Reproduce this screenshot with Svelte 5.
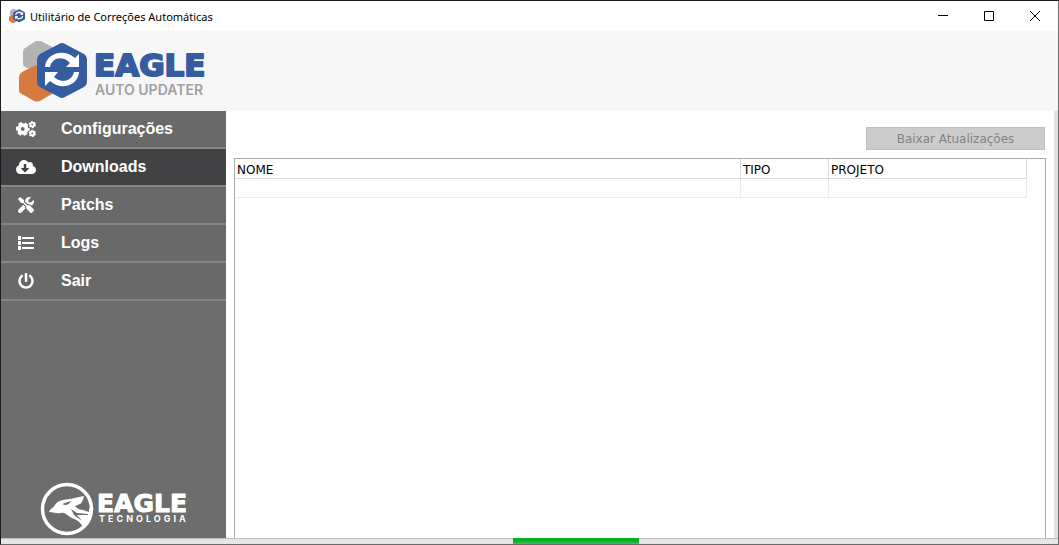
<script lang="ts">
	type Row = { nome: string; tipo: string; projeto: string };

	const menu = [
		{ id: 'config', label: 'Configurações' },
		{ id: 'downloads', label: 'Downloads' },
		{ id: 'patchs', label: 'Patchs' },
		{ id: 'logs', label: 'Logs' },
		{ id: 'sair', label: 'Sair' }
	];

	let active = $state('downloads');
	let rows = $state<Row[]>([{ nome: '', tipo: '', projeto: '' }]);
	let progress = $state({ start: 48.4, size: 12 });
</script>

<svelte:head>
	<title>Utilitário de Correções Automáticas</title>
</svelte:head>

{#snippet hexagons()}
	<path d="M22 0 L35 7 Q37 8 37 11 V25 L22 34 L6 26 Q4 25 4 22 V11 Q4 8 6 7 L17 0 Q20 -1 22 0Z" fill="#b3b3b3" />
	<path d="M3 31 L15 25 Q18 23 21 25 L34 32 V50 Q34 53 31 54 L21 60 Q18 61 15 60 L3 53 Q0 52 0 49 V36 Q0 33 3 31Z" fill="#d77a3f" />
	<path d="M40 3 Q43 1 46 3 L65 13 Q68 15 68 18 V41 Q68 44 65 46 L46 56 Q43 58 40 56 L21 46 Q18 44 18 41 V18 Q18 15 21 13Z" fill="#345c9f" />
	<path d="M26 26 C27 12 45 7 56 17 L60 13 V26 H47 L51 22 C43 14 33 17 31 26Z" fill="#fff" />
	<path d="M60 31 C59 45 42 50 31 40 L26 45 V31 H39 L35 36 C43 43 53 40 55 31Z" fill="#fff" />
{/snippet}

<div class="window">
	<header class="titlebar">
		<svg class="app-icon" viewBox="0 0 68 61" aria-hidden="true">{@render hexagons()}</svg>
		<span class="title">Utilitário de Correções Automáticas</span>
		<div class="controls">
			<button type="button" aria-label="Minimizar">
				<svg viewBox="0 0 10 10"><path d="M0 4.5H10" /></svg>
			</button>
			<button type="button" aria-label="Maximizar">
				<svg viewBox="0 0 10 10"><path d="M.5 .5H9.5V9.5H.5Z" /></svg>
			</button>
			<button type="button" aria-label="Fechar">
				<svg viewBox="0 0 10 10"><path d="M0 0L10 10M10 0L0 10" /></svg>
			</button>
		</div>
	</header>

	<div class="banner">
		<svg class="brand-icon" viewBox="0 0 68 61" aria-hidden="true">{@render hexagons()}</svg>
		<svg class="brand-name" viewBox="0 0 120 61">
			<text class="brand-title" x="-1" y="35">EAGLE</text>
			<text class="brand-sub" x="0" y="54">AUTO UPDATER</text>
		</svg>
	</div>

	<div class="body">
		<aside>
			<nav>
				{#each menu as item (item.id)}
					<button type="button" class:active={active === item.id} onclick={() => (active = item.id)}>
						<span class="icon">
							{#if item.id === 'config'}
								<svg width="20" height="16" viewBox="0 0 20 16">
									<g fill="none" stroke="#fff">
										<circle cx="6.7" cy="8" r="3.8" stroke-width="3.8" />
										<circle cx="6.7" cy="8" r="6" stroke-width="2" stroke-dasharray="3.64 2.64" stroke-dashoffset="1.8" />
										<circle cx="16.3" cy="3.6" r="1.9" stroke-width="2" />
										<circle cx="16.3" cy="3.6" r="3" stroke-width="1.3" stroke-dasharray="1.8 1.34" />
										<circle cx="16.3" cy="12.4" r="1.9" stroke-width="2" />
										<circle cx="16.3" cy="12.4" r="3" stroke-width="1.3" stroke-dasharray="1.8 1.34" />
									</g>
								</svg>
							{:else if item.id === 'downloads'}
								<svg width="20" height="16" viewBox="0 0 640 512">
									<path d="M537.6 226.6c4.1-10.7 6.4-22.4 6.4-34.6 0-53-43-96-96-96-19.7 0-38.1 6-53.3 16.2C367 64.2 315.3 32 256 32c-88.4 0-160 71.6-160 160 0 2.7.1 5.4.2 8.1C40.2 219.8 0 273.2 0 336c0 79.5 64.5 144 144 144h368c70.7 0 128-57.3 128-128 0-61.9-44-113.6-102.4-125.4zm-132.9 88.7L299.3 420.7c-6.2 6.2-16.4 6.2-22.6 0L171.3 315.3c-10.1-10.1-2.9-27.3 11.3-27.3H248V176c0-8.8 7.2-16 16-16h48c8.8 0 16 7.2 16 16v112h65.4c14.2 0 21.4 17.2 11.3 27.3z" />
								</svg>
							{:else if item.id === 'patchs'}
								<svg width="16" height="16" viewBox="0 0 512 512">
									<path d="M501.1 395.7L384 278.6c-23.1-23.1-57.6-27.6-85.4-13.9L192 158.1V96L64 0 0 64l96 128h62.1l106.6 106.6c-13.6 27.8-9.2 62.3 13.9 85.4l117.1 117.1c14.6 14.6 38.2 14.6 52.7 0l52.7-52.7c14.5-14.6 14.5-38.2 0-52.7zM331.7 225c28.3 0 54.9 11 74.9 31l19.4 19.4c15.8-6.9 30.8-16.5 43.8-29.5 37.1-37.1 49.7-89.3 37.9-136.7-2.2-9-13.5-12.1-20.1-5.5l-74.4 74.4-67.9-11.3L334 98.9l74.4-74.4c6.6-6.6 3.4-17.9-5.7-20.2-47.4-11.7-99.6.9-136.6 37.9-28.5 28.5-41.9 66.1-41.2 103.6l82.1 82.1c8.1-1.9 16.5-2.9 24.7-2.9zm-103.9 82l-56.7-56.7L18.7 402.8c-25 25-25 65.5 0 90.5s65.5 25 90.5 0l123.6-123.6c-7.6-19.9-9.9-41.6-5-62.7z" />
								</svg>
							{:else if item.id === 'logs'}
								<svg width="16" height="16" viewBox="0 0 16 16">
									<path d="M0 1h3v4H0zM0 6h3v4H0zM0 11h3v4H0zM4 2h12v2H4zM4 7h12v2H4zM4 12h12v2H4z" />
								</svg>
							{:else}
								<svg width="16" height="16" viewBox="0 0 512 512">
									<path d="M400 54.1c63 45 104 118.6 104 201.9 0 136.8-110.8 247.7-247.5 248C120 504.3 8.2 393 8 256.4 7.9 173.1 48.9 99.3 111.8 54.2c11.7-8.3 28-4.8 35 7.7L162.6 90c5.9 10.5 3.1 23.8-6.6 31-41.5 30.8-68 79.6-68 134.9-.1 92.3 74.5 168.1 168 168.1 91.6 0 168.6-74.2 168-169.1-.3-51.8-24.7-101.8-68.1-134-9.7-7.2-12.4-20.5-6.5-30.9l15.8-28.1c7-12.4 23.2-16.1 34.8-7.8zM296 264V24c0-13.3-10.7-24-24-24h-32c-13.3 0-24 10.7-24 24v240c0 13.3 10.7 24 24 24h32c13.3 0 24-10.7 24-24z" />
								</svg>
							{/if}
						</span>
						{item.label}
					</button>
				{/each}
			</nav>

			<svg class="company" viewBox="0 0 150 54">
				<circle cx="27" cy="27" r="24.5" fill="none" stroke="#fff" stroke-width="3.5" />
				<path d="M9 30 C10 27 13 26 15 23 C19 17 25 18 30 17 C35 16 39 15 44 14 C43 19 41 22 38 24 L51 27 L50 37 L43 46 C41 40 37 38 32 36 C27 34 26 30 21 31 C17 32 14 30 9 30Z" fill="#fff" />
				<g fill="#6d6d6d">
					<path d="M22 22 L31 19 Q29 23 25 23Z" />
					<path d="M35 24 Q38 28 43 28 L49 30 V26 L40 22Z" />
					<path d="M31 27 L37 31 L48 32 V33 L37 33 L42 39 L34 33Z" />
				</g>
				<text class="company-title" x="57" y="30">EAGLE</text>
				<text class="company-sub" x="59" y="40">TECNOLOGIA</text>
			</svg>
		</aside>

		<main>
			<div class="toolbar">
				<button type="button" disabled>Baixar Atualizações</button>
			</div>
			<div class="grid">
				<table>
					<thead>
						<tr>
							<th class="nome">NOME</th>
							<th class="tipo">TIPO</th>
							<th>PROJETO</th>
						</tr>
					</thead>
					<tbody>
						{#each rows as row}
							<tr>
								<td>{row.nome}</td>
								<td>{row.tipo}</td>
								<td>{row.projeto}</td>
							</tr>
						{/each}
					</tbody>
				</table>
			</div>
		</main>
	</div>

	<div class="progress" role="progressbar" aria-label="Progresso">
		<div class="chunk" style="margin-left: {progress.start}%; width: {progress.size}%"></div>
	</div>
</div>

<style>
	:global(body) {
		margin: 0;
	}
	.window {
		box-sizing: border-box;
		display: flex;
		flex-direction: column;
		min-height: 100vh;
		border: 1px solid #6b6b6b;
		border-top-color: #1e1b1e;
		border-left-color: #1e1b1e;
		background: #fff;
	}
	button {
		font: inherit;
		border: none;
		background: none;
		padding: 0;
	}
	.titlebar {
		display: flex;
		align-items: center;
		height: 30px;
		padding-left: 8px;
		font-family: 'Noto Sans', 'Open Sans', sans-serif;
		font-size: 11px;
		color: #000;
	}
	.app-icon {
		width: 16px;
		height: 16px;
		margin-right: 5px;
	}
	.title {
		flex: 1;
	}
	.controls {
		display: flex;
		align-self: stretch;
	}
	.controls button {
		width: 46px;
		display: grid;
		place-items: center;
	}
	.controls svg {
		width: 10px;
		height: 10px;
		fill: none;
		stroke: #000;
	}
	.banner {
		display: flex;
		align-items: center;
		height: 80px;
		padding-left: 18px;
		gap: 8px;
		background: #f7f7f7;
	}
	.brand-icon {
		width: 68px;
		height: 61px;
	}
	.brand-name {
		width: 120px;
		height: 61px;
		overflow: visible;
	}
	.brand-title,
	.company-title {
		font-family: 'DejaVu Sans', Verdana, sans-serif;
		font-weight: bold;
		stroke-linejoin: round;
	}
	.brand-title {
		font-size: 31px;
		fill: #345c9f;
		stroke: #345c9f;
		stroke-width: 2px;
	}
	.brand-sub {
		font: 600 14px Inter, sans-serif;
		fill: #a0a0a4;
	}
	.body {
		flex: 1;
		display: flex;
	}
	aside {
		width: 225px;
		flex: none;
		display: flex;
		flex-direction: column;
		justify-content: space-between;
		background: #6d6d6d;
	}
	nav button {
		display: flex;
		align-items: center;
		box-sizing: border-box;
		width: 100%;
		height: 38px;
		padding: 0 0 0 10px;
		border-bottom: 2px solid #868686;
		background: #696969;
		color: #fff;
		font-family: 'Liberation Sans', Arial, sans-serif;
		font-size: 16px;
		font-weight: bold;
		text-align: left;
	}
	nav button.active {
		background: #424244;
	}
	.icon {
		display: grid;
		place-items: center;
		width: 30px;
		margin-right: 20px;
	}
	.icon svg {
		fill: #fff;
	}
	.company {
		width: 150px;
		height: 54px;
		margin: 0 0 2px 39px;
		overflow: visible;
	}
	.company-title {
		font-size: 25px;
		fill: #fff;
		stroke: #fff;
		stroke-width: 1px;
	}
	.company-sub {
		font: 700 9px Inter, sans-serif;
		letter-spacing: 3px;
		fill: #fff;
	}
	main {
		flex: 1;
		display: flex;
		flex-direction: column;
		padding: 16px 8px 0;
		border-right: 4px solid #e1e1e1;
		font-family: 'DejaVu Sans', Verdana, sans-serif;
	}
	.toolbar {
		display: flex;
		justify-content: flex-end;
		padding-right: 1px;
		margin-bottom: 8px;
	}
	.toolbar button {
		box-sizing: border-box;
		width: 179px;
		height: 23px;
		border: 1px solid #bfbfbf;
		background: #ccc;
		color: #838383;
		font-size: 12px;
	}
	.grid {
		flex: 1;
		border: 1px solid #a9abae;
		border-bottom: none;
		padding-right: 18px;
	}
	table {
		width: 100%;
		table-layout: fixed;
		border-collapse: separate;
		border-spacing: 0;
		font-size: 12px;
		color: #000;
	}
	th,
	td {
		box-sizing: border-box;
		padding: 2px 2px 0;
		border-right: 1px solid #ececec;
		border-bottom: 1px solid #ececec;
		font-weight: normal;
		text-align: left;
	}
	th {
		height: 20px;
		border-color: #dadada;
	}
	td {
		height: 19px;
	}
	.nome {
		width: 506px;
	}
	.tipo {
		width: 88px;
	}
	.progress {
		box-sizing: border-box;
		height: 6px;
		background: #e6e6e6;
		box-shadow: inset 0 1px #bcbcbc;
	}
	.chunk {
		height: 100%;
		background: linear-gradient(#06b025 50%, #3fc258);
	}
</style>
